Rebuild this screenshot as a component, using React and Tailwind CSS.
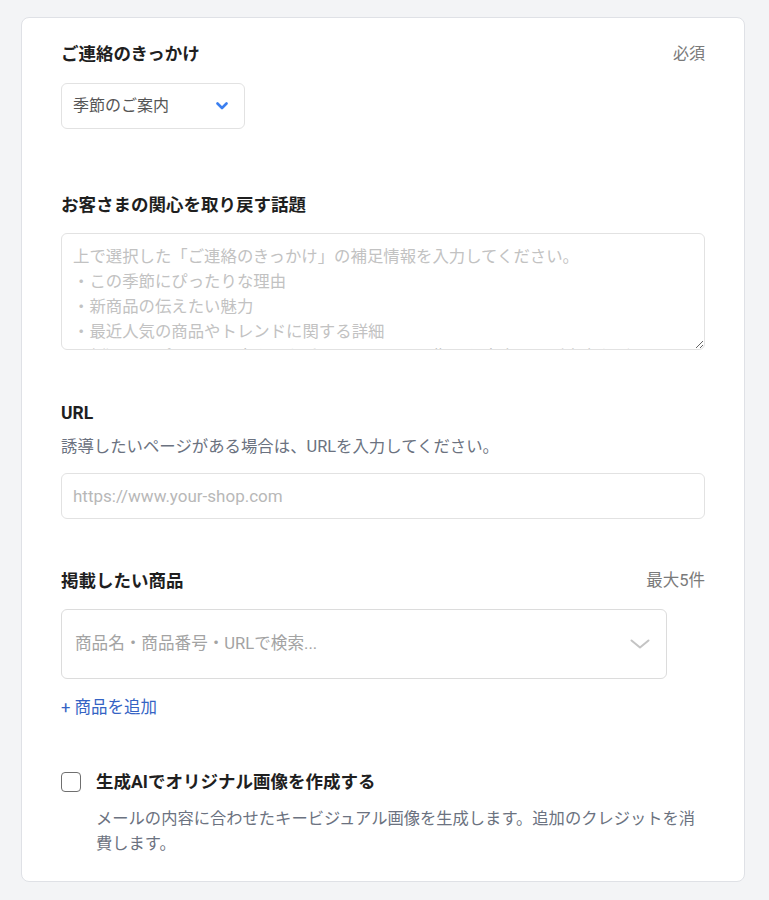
import { useState } from 'react';

const textareaPlaceholder = [
  '上で選択した「ご連絡のきっかけ」の補足情報を入力してください。',
  '・この季節にぴったりな理由',
  '・新商品の伝えたい魅力',
  '・最近人気の商品やトレンドに関する詳細',
  '・例）夏にぴったりの爽やかな香りを届けたい、期間限定商品のご案内など',
].join('\n');

function ChevronBlue() {
  return (
    <svg width="12" height="8" viewBox="0 0 12 8" fill="none">
      <path d="M1.5 1.5 6 6l4.5-4.5" stroke="#3b7ff0" strokeWidth="2.6" strokeLinecap="round" strokeLinejoin="round" />
    </svg>
  );
}

function ChevronGray() {
  return (
    <svg width="20" height="10" viewBox="0 0 20 10" fill="none">
      <path d="M1.5 1.5 10 8.5l8.5-7" stroke="#c4c4c4" strokeWidth="2" strokeLinecap="round" strokeLinejoin="round" />
    </svg>
  );
}

export default function App() {
  const [checked, setChecked] = useState(false);

  return (
    <div
      className="min-h-[900px] bg-[#f3f4f6] pt-[17px] pb-[17px]"
      style={{ fontFamily: 'Roboto, "Noto Sans CJK JP", sans-serif' }}
    >
      <div className="ml-[21px] w-[724px] rounded-lg border border-[#dfe1e6] bg-white px-[39px] pt-[23px] pb-[25px]">
        {/* ご連絡のきっかけ */}
        <div className="flex items-center justify-between">
          <h3 className="text-[17.5px] leading-[26px] font-bold text-[#1f1f1f]">ご連絡のきっかけ</h3>
          <span className="text-[16px] leading-[26px] text-[#7a7a7a]">必須</span>
        </div>
        <button
          type="button"
          className="mt-[16px] flex h-[46px] w-[184px] items-center justify-between rounded-md border border-[#e2e2e2] bg-white pl-[11px] pr-[16px] text-left"
        >
          <span className="text-[16px] text-[#555555]">季節のご案内</span>
          <ChevronBlue />
        </button>

        {/* お客さまの関心を取り戻す話題 */}
        <h3 className="mt-[63px] text-[17.5px] leading-[26px] font-bold text-[#1f1f1f]">
          お客さまの関心を取り戻す話題
        </h3>
        <textarea
          className="mt-[15px] block h-[117px] w-full rounded-md border border-[#e2e2e2] px-[11px] pt-[10px] pb-[10px] text-[16.4px] leading-[25px] text-[#333] placeholder:text-[#c2c2c2] outline-none"
          placeholder={textareaPlaceholder}
        />

        {/* URL */}
        <h3 className="mt-[50px] text-[17.5px] leading-[26px] font-bold text-[#1f1f1f]">URL</h3>
        <p className="mt-2 text-[16.4px] leading-[25px] text-[#6b7280]">
          誘導したいページがある場合は、URLを入力してください。
        </p>
        <input
          type="text"
          className="mt-[14px] block h-[46px] w-full rounded-md border border-[#e2e2e2] px-[11px] text-[17px] text-[#333] placeholder:text-[#b8b8b8] outline-none"
          placeholder="https://www.your-shop.com"
        />

        {/* 掲載したい商品 */}
        <div className="mt-[49px] flex items-center justify-between">
          <h3 className="text-[17.5px] leading-[26px] font-bold text-[#1f1f1f]">掲載したい商品</h3>
          <span className="text-[16.5px] leading-[26px] text-[#7a7a7a]">最大5件</span>
        </div>
        <div className="mt-[15px] flex h-[70px] w-[606px] items-center justify-between rounded-md border border-[#dcdcdc] pl-[13px] pr-[16px]">
          <span className="text-[16.6px] text-[#a3a3a3]">商品名・商品番号・URLで検索...</span>
          <ChevronGray />
        </div>
        <button type="button" className="mt-[17px] block text-[16.5px] leading-[24px] text-[#3563c4]">
          + 商品を追加
        </button>

        {/* 生成AI */}
        <label className="mt-[49px] flex cursor-pointer items-center gap-[15px]">
          <input
            type="checkbox"
            checked={checked}
            onChange={(e) => setChecked(e.target.checked)}
            className="sr-only"
          />
          <span className="flex h-[20px] w-[20px] shrink-0 items-center justify-center rounded-[4px] border-[1.5px] border-[#6f6f6f] bg-white" />
          <span className="text-[17.5px] leading-[26px] font-bold text-[#1f1f1f]">
            生成AIでオリジナル画像を作成する
          </span>
        </label>
        <p className="mt-[11px] pl-[35px] text-[16.3px] leading-[25px] text-[#6b7280]">
          メールの内容に合わせたキービジュアル画像を生成します。追加のクレジットを消費します。
        </p>
      </div>
    </div>
  );
}
